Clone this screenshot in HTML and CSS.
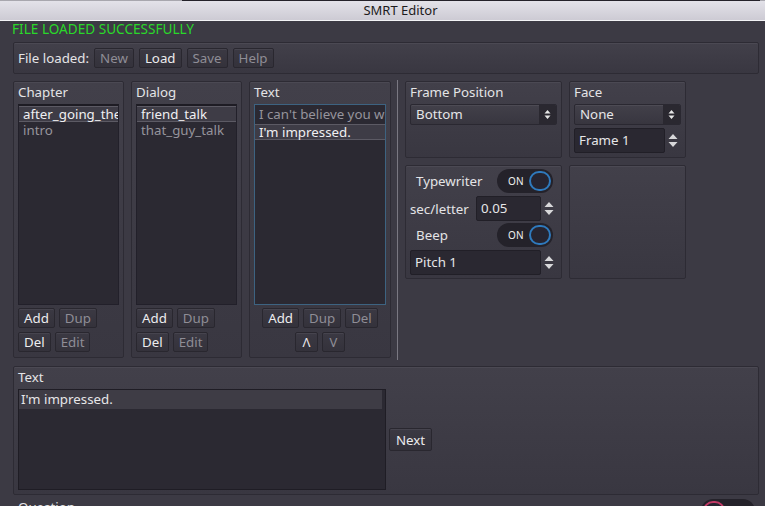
FILE: index.html
```html
<!DOCTYPE html>
<html>
<head>
<meta charset="utf-8">
<title>SMRT Editor</title>
<link rel="stylesheet" href="styles.css">
</head>
<body>
<div class="window">
  <div class="topline"></div>
  <div class="titlebar">SMRT Editor</div>
  <div class="content">
    <div class="status">FILE LOADED SUCCESSFULLY</div>
    <div class="panel toolbar">
      <span class="tlabel">File loaded:</span>
      <button class="btn dis">New</button>
      <button class="btn">Load</button>
      <button class="btn dis">Save</button>
      <button class="btn dis">Help</button>
    </div>

    <div class="mainrow">
      <div class="panel listpanel w111">
        <div class="plabel">Chapter</div>
        <div class="list">
          <div class="item sel">after_going_the_ruins</div>
          <div class="item">intro</div>
        </div>
        <div class="btnrow gap-top"><button class="btn">Add</button><button class="btn dis">Dup</button></div>
        <div class="btnrow"><button class="btn">Del</button><button class="btn dis">Edit</button></div>
      </div>

      <div class="panel listpanel w111">
        <div class="plabel">Dialog</div>
        <div class="list">
          <div class="item sel">friend_talk</div>
          <div class="item">that_guy_talk</div>
        </div>
        <div class="btnrow gap-top"><button class="btn">Add</button><button class="btn dis">Dup</button></div>
        <div class="btnrow"><button class="btn">Del</button><button class="btn dis">Edit</button></div>
      </div>

      <div class="panel listpanel w142">
        <div class="plabel">Text</div>
        <div class="list focus">
          <div class="item tall">I can't believe you went there!</div>
          <div class="item sel">I'm impressed.</div>
        </div>
        <div class="btnrow center gap-top"><button class="btn">Add</button><button class="btn dis">Dup</button><button class="btn dis">Del</button></div>
        <div class="btnrow center"><button class="btn arrowbtn">&#923;</button><button class="btn arrowbtn dis">V</button></div>
      </div>

      <div class="vsep"></div>

      <div class="rightgrid">
        <div class="panel cpanel">
          <div class="plabel">Frame Position</div>
          <div class="option mt4">
            <span class="optext">Bottom</span>
            <span class="optarrow"><svg width="7" height="11" viewBox="0 0 7 11"><path d="M0.5 4.5 L3.5 1 L6.5 4.5 Z M0.5 6.5 L3.5 10 L6.5 6.5 Z" fill="#e6e6e6"/></svg></span>
          </div>
        </div>

        <div class="panel cpanel">
          <div class="plabel">Face</div>
          <div class="option mt4">
            <span class="optext">None</span>
            <span class="optarrow"><svg width="7" height="11" viewBox="0 0 7 11"><path d="M0.5 4.5 L3.5 1 L6.5 4.5 Z M0.5 6.5 L3.5 10 L6.5 6.5 Z" fill="#e6e6e6"/></svg></span>
          </div>
          <div class="spin mt3">
            <span class="edit w91">Frame 1</span>
            <span class="spinarrow"><svg width="10" height="15" viewBox="0 0 10 15"><path d="M0.5 6 L5 1 L9.5 6 Z M0.5 9 L5 14 L9.5 9 Z" fill="#d8d8da"/></svg></span>
          </div>
        </div>

        <div class="panel cpanel tw">
          <div class="checkrow">
            <span class="clabel">Typewriter</span>
            <span class="toggle on"><span class="ttext">ON</span><span class="knob"></span></span>
          </div>
          <div class="spin">
            <span class="slabel">sec/letter</span>
            <span class="edit w65">0.05</span>
            <span class="spinarrow"><svg width="10" height="15" viewBox="0 0 10 15"><path d="M0.5 6 L5 1 L9.5 6 Z M0.5 9 L5 14 L9.5 9 Z" fill="#d8d8da"/></svg></span>
          </div>
          <div class="checkrow">
            <span class="clabel">Beep</span>
            <span class="toggle on"><span class="ttext">ON</span><span class="knob"></span></span>
          </div>
          <div class="spin">
            <span class="edit w131">Pitch 1</span>
            <span class="spinarrow"><svg width="10" height="15" viewBox="0 0 10 15"><path d="M0.5 6 L5 1 L9.5 6 Z M0.5 9 L5 14 L9.5 9 Z" fill="#d8d8da"/></svg></span>
          </div>
        </div>

        <div class="panel cpanel"></div>
      </div>
    </div>

    <div class="panel textpanel">
      <div class="plabel">Text</div>
      <div class="textrow">
        <div class="textedit">
          <div class="curline">I'm impressed.</div>
        </div>
        <button class="btn nextbtn">Next</button>
      </div>
    </div>

    <div class="qrow">
      <span class="qlabel">Question</span>
      <span class="toggle off"><span class="knob"></span><span class="ttext">OFF</span></span>
    </div>
  </div>
</div>
</body>
</html>
```

FILE: styles.css
```css
* { box-sizing: border-box; }

html, body {
  margin: 0;
  padding: 0;
  width: 765px;
  height: 506px;
  overflow: hidden;
  background: #3c3a44;
}

body {
  font-family: "Noto Sans", "DejaVu Sans", sans-serif;
  font-size: 13.3px;
  color: #e4e4e6;
}

.window {
  width: 765px;
  height: 506px;
  overflow: hidden;
  display: flex;
  flex-direction: column;
}

.topline {
  height: 1px;
  flex: none;
  background: linear-gradient(to right, #a8a7ae 0, #a8a7ae 182px, #24222a 182px, #24222a 760px, #a8a7ae 760px);
}

.titlebar {
  height: 20px;
  flex: none;
  background: linear-gradient(to bottom, #e3e2e9, #cdcbd4);
  border-bottom: 1px solid #f2f2f5;
  color: #1c1b20;
  font-size: 13px;
  line-height: 19px;
  text-align: center;
  padding-left: 36px;
}

.content {
  flex: none;
  padding: 0 6px 0 13px;
  display: flex;
  flex-direction: column;
}

.status {
  height: 16px;
  line-height: 16px;
  margin-left: -1px;
  margin-bottom: 5px;
  color: #2ad82a;
  font-size: 13.6px;
}

.panel {
  border: 1px solid #2d2b34;
  background: linear-gradient(to bottom, #42404a, #393741);
  box-shadow: inset 0 1px 0 rgba(255, 255, 255, 0.05);
  border-radius: 2px;
}

.toolbar {
  height: 32px;
  display: flex;
  align-items: center;
  gap: 5px;
  padding-left: 4px;
}

.tlabel {
  margin-right: 0;
  line-height: 16px;
}

.btn {
  font-family: inherit;
  font-size: 13.3px;
  height: 20px;
  line-height: 17px;
  padding: 0 5px;
  margin: 0;
  border: 1px solid #29272f;
  border-radius: 2px;
  background: linear-gradient(to bottom, #3b3943, #34323b);
  box-shadow: inset 0 1px 0 rgba(255, 255, 255, 0.06);
  color: #ececee;
}

.btn.dis {
  color: #8f8d96;
}

.mainrow {
  margin-top: 7px;
  height: 277px;
  display: flex;
  gap: 7px;
}

.listpanel {
  display: flex;
  flex-direction: column;
  padding: 2px 4px 5px 4px;
}

.w111 { width: 111px; }
.w142 { width: 142px; }

.plabel {
  height: 16px;
  line-height: 16px;
  white-space: nowrap;
}

.list {
  flex: 1;
  margin-top: 4px;
  background: #2b2932;
  border: 1px solid #22202a;
  border-top: 2px solid #1e1c24;
  overflow: hidden;
}

.list.focus {
  border: 1px solid #3d6381;
}

.item {
  height: 16px;
  line-height: 16px;
  padding-left: 4px;
  white-space: nowrap;
  overflow: hidden;
  color: #96949c;
}

.item.tall {
  height: 19px;
  line-height: 18px;
}

.item.sel {
  color: #f0f0f2;
  background: #3e3c46;
  box-shadow: inset 0 1px 0 #5c5a64, inset 0 -1px 0 #5c5a64;
}

.btnrow {
  display: flex;
  gap: 4px;
  margin-top: 4px;
}

.btnrow.gap-top {
  margin-top: 3px;
}

.btnrow.center {
  justify-content: center;
}

.arrowbtn {
  width: 23px;
  padding: 0;
  text-align: center;
  font-size: 13px;
}

.vsep {
  width: 1px;
  margin-left: -1px;
  background: #7a7882;
  height: 280px;
  margin-top: -1px;
}

.rightgrid {
  display: grid;
  grid-template-columns: 157px 117px;
  grid-template-rows: 77px 114px;
  column-gap: 7px;
  row-gap: 7px;
  align-self: flex-start;
}

.cpanel {
  padding: 2px 4px 2px 4px;
  display: flex;
  flex-direction: column;
}

.mt4 { margin-top: 4px; }
.mt3 { margin-top: 3px; }

.option {
  height: 21px;
  display: flex;
  border: 1px solid #2a2831;
  border-radius: 2px;
  background: linear-gradient(to bottom, #42404a, #38363f);
  box-shadow: inset 0 1px 0 rgba(255, 255, 255, 0.06);
  overflow: hidden;
}

.optext {
  flex: 1;
  line-height: 18px;
  padding-left: 5px;
  color: #e6e6e8;
}

.optarrow {
  width: 17px;
  background: #2a2830;
  display: flex;
  align-items: center;
  justify-content: center;
}

.spin {
  display: flex;
  align-items: center;
  height: 25px;
}

.edit {
  height: 25px;
  line-height: 23px;
  padding-left: 4px;
  background: #2a2831;
  border: 1px solid #211f27;
  border-radius: 2px;
  color: #e6e6e8;
  white-space: nowrap;
}

.w91 { width: 91px; }
.w65 { width: 65px; }
.w131 { width: 131px; }

.spinarrow {
  width: 16px;
  display: flex;
  justify-content: center;
  align-items: center;
}

.tw {
  padding-top: 3px;
}

.tw .checkrow {
  height: 24px;
  display: flex;
  align-items: center;
  justify-content: space-between;
  padding: 0 4px 0 6px;
}

.tw .spin {
  margin-top: 3px;
}

.tw .spin + .checkrow {
  margin-top: 2px;
}

.clabel {
  line-height: 16px;
}

.slabel {
  width: 66px;
  line-height: 16px;
  white-space: nowrap;
}

.toggle {
  width: 56px;
  height: 24px;
  border-radius: 12px;
  background: #24222a;
  display: flex;
  align-items: center;
  padding: 0 2px 0 11px;
  justify-content: space-between;
}

.ttext {
  font-size: 10px;
  color: #f0f0f0;
  letter-spacing: 0.2px;
  line-height: 12px;
}

.knob {
  width: 22px;
  height: 20px;
  border-radius: 11px;
  border: 2px solid #2f7abd;
  background: #262430;
}

.toggle.off {
  padding: 0 8px 0 2px;
}

.toggle.off .knob {
  border-color: #c23a66;
}

.textpanel {
  margin-top: 8px;
  height: 129px;
  padding: 2px 4px 4px 4px;
  display: flex;
  flex-direction: column;
}

.textrow {
  margin-top: 4px;
  display: flex;
  align-items: center;
  gap: 3px;
}

.textedit {
  width: 368px;
  height: 101px;
  background: #2b2932;
  border: 1px solid #1f1d25;
  padding-right: 3px;
}

.curline {
  height: 19px;
  line-height: 18px;
  padding-left: 2px;
  background: #3e3c45;
  color: #e6e6e8;
}

.nextbtn {
  height: 23px;
  line-height: 20px;
  width: 43px;
  padding: 0;
  text-align: center;
}

.qrow {
  margin-top: 4px;
  height: 24px;
  display: flex;
  justify-content: space-between;
  align-items: flex-start;
  padding: 0 4px 0 5px;
}

.qlabel {
  line-height: 16px;
  margin-top: 0;
}

.qrow .toggle {
  width: 54px;
}
```
